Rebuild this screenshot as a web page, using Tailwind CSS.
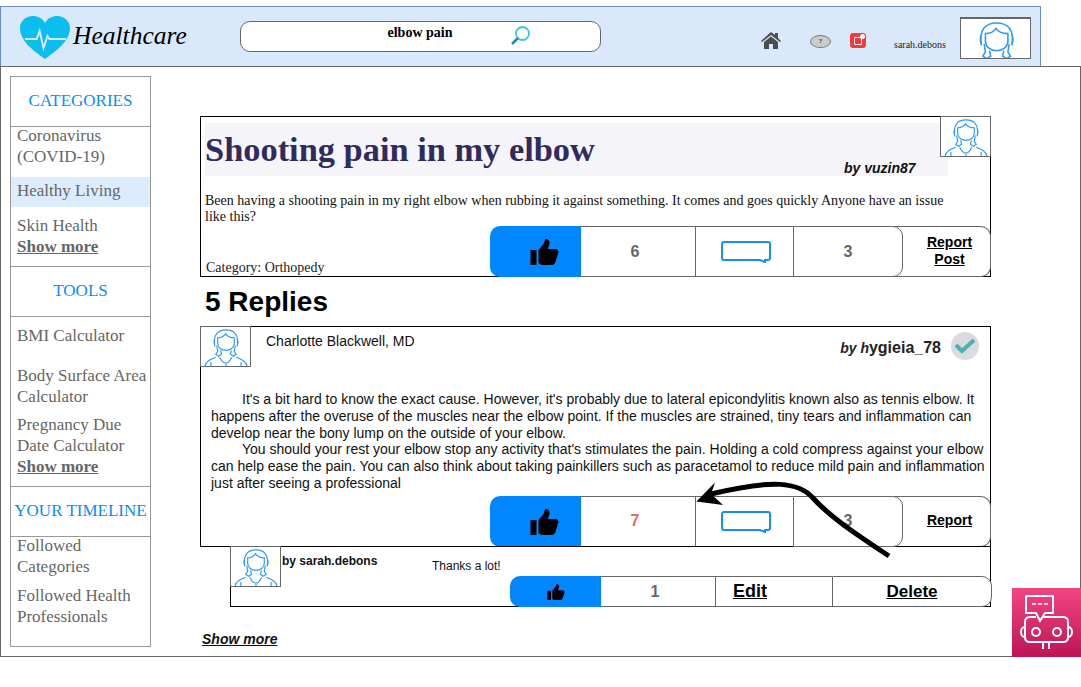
<!DOCTYPE html>
<html lang="en">
<head>
    <meta charset="UTF-8">
    <meta name="viewport" content="width=device-width, initial-scale=1.0">
    <title>Healthcare</title>
    <script src="https://cdn.jsdelivr.net/npm/@tailwindcss/browser@4"></script>
</head>

<body class="bg-white font-['Liberation_Serif',serif]">

    <svg class="hidden">
        <symbol id="person" viewBox="0 0 50 40">
            <g fill="none" stroke="#2f9bf5" stroke-width="1.200">
                <path d="M14 20C12 8 17 3 25.500 3S39 8 37 20"/>
                <path d="M17 11c3 0 6-1 8-4 2 3 5 4 9 4v6c0 4-4 7-8.500 7S17 21 17 17z"/>
                <path d="M14 12c-1 2-1 5 0 7M37 12c1 2 1 5 0 7"/>
                <path d="M16 19l1 6-2 3 3 2 3-2-1-4M35 19l-1 6 2 3-3 2-3-2 1-4"/>
                <path d="M4 40c1-5 6-7 11-9M47 40c-1-5-6-7-11-9M19 31c2 4 4 6 6.500 6s4-2 6-6"/>
                <path d="M10 36v4M41 36v4M25.500 38v2"/>
            </g>
        </symbol>
        <symbol id="thumb" viewBox="0 0 28 26">
            <path fill="#000" d="M0 11h6v15H0zM8 11l5-6c1-2 1-4 2-5 3 0 4 2 4 4 0 2-1 4-2 6h8c2 0 3 2 3 3l-3 10c-1 2-2 3-4 3H12c-2 0-4-1-4-3z"/>
        </symbol>
        <symbol id="bubble" viewBox="0 0 50 22">
            <path fill="#fff" stroke="#1a8cf5" stroke-width="2" d="M3 1h44c1 0 2 1 2 2v14c0 1-1 2-2 2h-3v2l-5-2H3c-1 0-2-1-2-2V3c0-1 1-2 2-2z"/>
        </symbol>
    </svg>

    <!-- Top bar -->
    <header class="mt-[6px] w-[1041px] h-[60px] bg-[#dae8fc] border border-[#6c8ebf] border-b-0 flex items-start">
        <svg class="ml-[19px] mt-[9px] w-[50px] h-[43px] shrink-0" viewBox="0 0 51 43" preserveAspectRatio="none">
            <path fill="#0cbef0" d="M25.500 43C14 35 0 25 0 12 0 5 6 0 13 0c5 0 10 2 12.500 7C28 2 33 0 38 0c7 0 13 5 13 12 0 13-14 23-25.500 31z"/>
            <path fill="none" stroke="#dae8fc" stroke-width="2" d="M5 23h12l3-8 4 17 4-12 2 3h17"/>
        </svg>
        <span class="ml-[3px] mt-[12px] text-[25.500px] leading-[34px] italic text-black w-[167px] shrink-0">Healthcare</span>
        <div class="mt-[14px] w-[361px] h-[31px] bg-white border border-[#666] rounded-[10px] relative shrink-0 flex justify-center">
            <span class="ml-[-1px] mt-[2px] text-sm leading-[17px] font-bold text-black">elbow pain</span>
            <svg class="absolute left-[269px] top-[3px] w-[21px] h-[21px]" viewBox="0 0 21 21">
                <circle cx="12.500" cy="8.500" r="6.500" fill="#fff" stroke="#3cc4e0" stroke-width="1.800"/>
                <path d="M8 13l-6 6" stroke="#1a8fa8" stroke-width="2.500"/>
            </svg>
        </div>
        <svg class="ml-[160px] mt-[25px] w-[20px] h-[17px] shrink-0" viewBox="0 0 20 17">
            <path fill="#4d4d4d" d="M10 0l4 3V1h3v5l3 3-1 1-9-7-9 7-1-1zM3 10l7-5.500 7 5.500v7h-5v-5H8v5H3z"/>
        </svg>
        <div class="ml-[29px] mt-[28px] w-[21px] h-[13px] rounded-[50%] bg-[#ccc] border border-[#777] shrink-0 flex items-center justify-center text-[7px] font-bold text-[#334]">?</div>
        <div class="ml-[19px] mt-[26px] w-[16px] h-[15px] rounded-[3px] bg-[#f43a3a] shrink-0 relative">
            <div class="ml-[4px] mt-[4px] w-[8px] h-[8px] border border-white rounded-[1px]"></div>
            <div class="absolute right-[1px] top-[1px] w-[5px] h-[5px] rounded-full bg-white"></div>
        </div>
        <span class="ml-[28px] mt-[32px] text-[10px] leading-[12px] text-[#222] w-[66px] shrink-0">sarah.debons</span>
        <div class="mt-[10px] w-[71px] h-[42px] bg-white border border-[#666] border-t-2 shrink-0 flex justify-center overflow-hidden">
            <svg class="w-[66px] h-[53px] shrink-0"><use href="#person"/></svg>
        </div>
    </header>

    <!-- Page frame -->
    <main class="w-[1081px] h-[591px] border border-[#666] relative flex items-start">

        <!-- Sidebar -->
        <aside class="ml-[9px] mt-[9px] w-[141px] h-[571px] border border-[#999] text-[17px] leading-[21px] text-[#666] shrink-0">
            <div class="h-[50px] border-b border-[#999] pb-[2px] flex items-center justify-center text-[#0a8cf5]">CATEGORIES</div>
            <div class="h-[140px] border-b border-[#999] flex flex-col">
                <p class="px-[6px] h-[50px] -mt-[2px]">Coronavirus<br>(COVID-19)</p>
                <p class="px-[6px] h-[30px] mt-[2px] bg-[#dcecfd] leading-[28px]">Healthy Living</p>
                <p class="px-[6px] mt-[8px]">Skin Health<br><span class="font-bold underline">Show more</span></p>
            </div>
            <div class="h-[50px] border-b border-[#999] pb-[2px] flex items-center justify-center text-[#0a8cf5]">TOOLS</div>
            <div class="h-[170px] border-b border-[#999] pl-[6px] pt-[8px]">
                <p class="h-[40px]">BMI Calculator</p>
                <p class="h-[49px]">Body Surface Area<br>Calculator</p>
                <p>Pregnancy Due<br>Date Calculator<br><span class="font-bold underline">Show more</span></p>
            </div>
            <div class="h-[50px] border-b border-[#999] pb-[2px] flex items-center justify-center text-[#0a8cf5]">YOUR TIMELINE</div>
            <div class="pl-[6px] -mt-[2px]">
                <p class="h-[50px]">Followed<br>Categories</p>
                <p>Followed Health<br>Professionals</p>
            </div>
        </aside>

        <!-- Content -->
        <section class="ml-[49px] mt-[49px] w-[791px] shrink-0">

            <article class="h-[161px] border border-black relative">
                <div class="absolute -right-px -top-px w-[51px] h-[41px] bg-white border border-[#666] z-10">
                    <svg class="w-[49px] h-[39px]"><use href="#person"/></svg>
                </div>
                <div class="ml-[4px] mt-[6px] w-[743px] h-[53px] bg-[#f5f5f9] relative">
                    <h1 class="text-[34.400px] leading-[53px] font-bold text-[#2f2b5d]">Shooting pain in my elbow</h1>
                    <span class="absolute left-[639px] top-[37px] font-['Liberation_Sans',sans-serif] text-sm leading-[17px] italic font-bold text-[#111]">by vuzin87</span>
                </div>
                <p class="ml-[4px] mt-[17px] w-[750px] text-sm leading-[16px] text-[#111]">Been having a shooting pain in my right elbow when rubbing it against something. It comes and goes quickly Anyone have an issue like this?</p>
                <span class="absolute left-[5px] top-[143px] text-sm leading-[16px] text-[#222]">Category: Orthopedy</span>
                <div class="absolute left-[289px] top-[109px] w-[501px] h-[51px] flex font-['Liberation_Sans',sans-serif] font-bold">
                    <div class="w-[91px] bg-[#0087ff] rounded-l-[10px] flex items-center justify-center pl-[18px]"><svg class="w-[29px] h-[26px]"><use href="#thumb"/></svg></div>
                    <div class="w-[114px] border-y border-[#666] bg-white pr-[6px] flex items-center justify-center text-base text-[#666]">6</div>
                    <div class="w-[98px] border-y border-l border-[#666] bg-white pl-[2px] flex items-center justify-center"><svg class="w-[50px] h-[22px]"><use href="#bubble"/></svg></div>
                    <div class="w-[110px] relative z-10 border border-[#666] rounded-r-[10px] bg-white flex items-center justify-center text-base text-[#666]">3</div>
                    <div class="w-[100px] -ml-[12px] border-y border-r border-[#666] rounded-r-[10px] bg-white pl-[18px] pb-[2px] flex items-center justify-center text-center text-sm leading-[17px] underline text-black">Report<br>Post</div>
                </div>
            </article>

            <h2 class="ml-[5px] mt-[9px] h-[40px] font-['Liberation_Sans',sans-serif] text-[28px] leading-[32px] font-bold text-black">5 Replies</h2>

            <article class="h-[221px] border border-black relative font-['Liberation_Sans',sans-serif]">
                <div class="absolute -left-px -top-px w-[51px] h-[41px] bg-white border border-[#666]">
                    <svg class="w-[49px] h-[39px]"><use href="#person"/></svg>
                </div>
                <p class="ml-[65px] mt-[6px] h-[17px] text-sm leading-[17px] text-[#111]">Charlotte Blackwell, MD</p>
                <div class="absolute right-[11px] top-[5px] flex items-center gap-[10px]">
                    <span class="text-base leading-[20px] font-bold text-[#222] mt-[4px]"><span class="italic text-sm">by h</span>ygieia_78</span>
                    <div class="w-[28px] h-[28px] rounded-full bg-[#d9dcdf] flex items-center justify-center">
                        <svg class="w-[24px] h-[18px]" viewBox="0 0 24 18"><path fill="none" stroke="#4db0b4" stroke-width="4" d="M3 8l6 6L21 3"/></svg>
                    </div>
                </div>
                <div class="ml-[10px] mt-[41px] w-[778px] text-sm leading-[16.800px] text-[#111]">
                    <p class="indent-[31px]">It's a bit hard to know the exact cause. However, it's probably due to lateral epicondylitis known also as tennis elbow. It happens after the overuse of the muscles near the elbow point. If the muscles are strained, tiny tears and inflammation can develop near the bony lump on the outside of your elbow.</p>
                    <p class="indent-[31px]">You should your rest your elbow stop any activity that's stimulates the pain. Holding a cold compress against your elbow can help ease the pain. You can also think about taking painkillers such as paracetamol to reduce mild pain and inflammation just after seeing a professional</p>
                </div>
                <div class="absolute left-[289px] top-[169px] w-[501px] h-[51px] flex font-bold">
                    <div class="w-[91px] bg-[#0087ff] rounded-l-[10px] flex items-center justify-center pl-[18px]"><svg class="w-[29px] h-[26px]"><use href="#thumb"/></svg></div>
                    <div class="w-[114px] border-y border-[#666] bg-white pr-[6px] pb-[2px] flex items-center justify-center text-base text-[#ea6b66]">7</div>
                    <div class="w-[98px] border-y border-l border-[#666] bg-white pl-[2px] flex items-center justify-center"><svg class="w-[50px] h-[22px]"><use href="#bubble"/></svg></div>
                    <div class="w-[110px] relative z-10 border border-[#666] rounded-r-[10px] bg-white pb-[2px] flex items-center justify-center text-base text-[#666]">3</div>
                    <div class="w-[100px] -ml-[12px] border-y border-r border-[#666] rounded-r-[10px] bg-white pl-[18px] pb-[4px] flex items-center justify-center text-sm underline text-black">Report</div>
                </div>
            </article>

            <article class="-mt-px ml-[30px] w-[761px] h-[61px] border border-black relative font-['Liberation_Sans',sans-serif]">
                <div class="absolute -left-px -top-px w-[51px] h-[41px] bg-white border border-[#666]">
                    <svg class="w-[49px] h-[39px]"><use href="#person"/></svg>
                </div>
                <span class="absolute left-[51px] top-[7px] text-xs leading-[15px] font-bold text-[#111]">by sarah.debons</span>
                <span class="absolute left-[201px] top-[12px] text-xs leading-[15px] text-[#111]">Thanks a lot!</span>
                <div class="absolute left-[279px] top-[29px] w-[482px] h-[31px] flex font-bold">
                    <div class="w-[91px] bg-[#0087ff] rounded-l-[10px] flex items-center justify-center"><svg class="w-[18px] h-[16px]"><use href="#thumb"/></svg></div>
                    <div class="w-[114px] border-y border-[#666] bg-white pr-[6px] flex items-center justify-center text-base text-[#666]">1</div>
                    <div class="w-[117px] border-y border-l border-[#666] bg-white pr-[48px] pb-[1px] flex items-center justify-center text-lg underline text-black">Edit</div>
                    <div class="w-[160px] border border-[#666] rounded-r-[10px] bg-white flex items-center justify-center text-[17px] underline text-black">Delete</div>
                </div>
            </article>

            <p class="ml-[2px] mt-[24px] font-['Liberation_Sans',sans-serif] text-sm leading-[17px] font-bold italic underline text-[#111]">Show more</p>
        </section>

        <!-- Annotation arrow -->
        <svg class="absolute left-[-1px] top-[-1px] z-20 w-[1081px] h-[591px] pointer-events-none" viewBox="0 66 1081 591">
            <path fill="none" stroke="#000" stroke-width="5" d="M889 556c-30-20-58-38-76-58-14-16-40-19-102-4"/>
            <path fill="#000" d="M696.500 501.500l18.500-19-4 11.500 12 11z"/>
        </svg>

        <!-- Chatbot button -->
        <div class="absolute right-[-1px] bottom-[-1px] w-[69px] h-[69px] bg-gradient-to-b from-[#f34482] to-[#bc1356]">
            <svg class="w-[69px] h-[69px]" viewBox="0 0 69 69" fill="none" stroke="#fff" stroke-width="2">
                <path d="M14 8h27v17H33l-5 8-4-8H14z"/>
                <path d="M20 16h4M26 16h4M32 16h4" stroke-width="1.500"/>
                <path d="M24 29h-6c-3 0-5 2-5 5v15c0 3 2 5 5 5h33c3 0 5-2 5-5V34c0-3-2-5-5-5H31"/>
                <circle cx="24" cy="44" r="4"/>
                <circle cx="45" cy="44" r="4"/>
                <path d="M13 39c-3 0-4 3-4 5s1 5 4 5M56 39c3 0 4 3 4 5s-1 5-4 5M31 54v7M37 54v7"/>
            </svg>
        </div>
    </main>

</body>
</html>
